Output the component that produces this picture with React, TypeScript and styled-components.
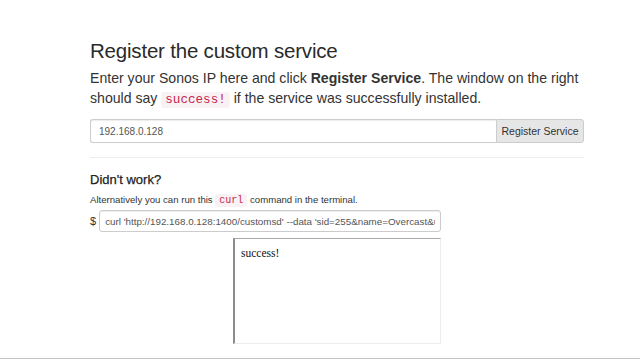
import styled, { createGlobalStyle } from 'styled-components';

import React from 'react';

const GlobalStyle = createGlobalStyle`
  html, body {
    margin: 0;
    padding: 0;
    background: #ffffff;
  }
  body {
    font-family: 'Liberation Sans', Arial, sans-serif;
    color: #333333;
  }
`;

const S: Record<string, any> = {};

S.Page = styled.div`
  width: 640px;
  height: 360px;
  overflow: hidden;
  display: flex;
  flex-direction: column;
`;

S.Container = styled.div`
  width: 494px;
  margin-left: 90px;
  padding-top: 38px;
  flex: 1;
`;

S.Title = styled.h2`
  margin: 0 0 4px;
  font-size: 20.5px;
  line-height: 26px;
  font-weight: 400;
  color: #2a2a2a;
  letter-spacing: -0.2px;
`;

S.Lead = styled.p`
  margin: 0 0 11px;
  font-size: 14.1px;
  line-height: 20px;
  color: #333;

  strong {
    font-weight: 700;
  }
`;

S.Code = styled.code`
  font-family: 'Liberation Mono', 'DejaVu Sans Mono', monospace;
  font-size: ${(p: { small?: boolean }) => (p.small ? '10px' : '12.6px')};
  line-height: 1;
  color: #c7254e;
  background: #f9f2f4;
  padding: 1px 4px;
  border-radius: 3px;
`;

S.InputGroup = styled.div`
  display: flex;
  height: 24px;
`;

S.Field = styled.input`
  flex: 1;
  min-width: 0;
  box-sizing: border-box;
  height: 100%;
  border: 1px solid #cccccc;
  border-right: none;
  border-radius: 3px 0 0 3px;
  padding: 0 8px;
  font-family: 'Liberation Sans', Arial, sans-serif;
  font-size: 10px;
  color: #555;
  box-shadow: inset 0 1px 1px rgba(0, 0, 0, 0.075);
  outline: none;
`;

S.Button = styled.button`
  box-sizing: border-box;
  height: 100%;
  width: 88px;
  border: 1px solid #cccccc;
  border-radius: 0 3px 3px 0;
  background: #e6e6e6;
  font-family: 'Liberation Sans', Arial, sans-serif;
  font-size: 10.5px;
  color: #333;
  padding: 0;
`;

S.Rule = styled.hr`
  margin: 14px 0 13px;
  border: 0;
  border-top: 1px solid #eeeeee;
`;

S.Subtitle = styled.h4`
  margin: 0 0 3px;
  font-size: 13px;
  line-height: 18px;
  font-weight: 400;
  color: #222;
  -webkit-text-stroke: 0.25px #222;
`;

S.Note = styled.p`
  margin: 0 0 2px;
  font-size: 9.6px;
  line-height: 16px;
  color: #333;
`;

S.CommandRow = styled.div`
  display: flex;
  align-items: center;
  gap: 3px;
  width: 351px;
  height: 22px;
`;

S.Dollar = styled.span`
  font-size: 11px;
  color: #333;
`;

S.Command = styled.input`
  flex: 1;
  min-width: 0;
  box-sizing: border-box;
  height: 100%;
  border: 1px solid #cccccc;
  border-radius: 3px;
  padding: 0 5px;
  font-family: 'Liberation Sans', Arial, sans-serif;
  font-size: 9.8px;
  color: #555;
  box-shadow: inset 0 1px 1px rgba(0, 0, 0, 0.075);
  outline: none;
`;

S.FrameWrap = styled.div`
  display: flex;
  justify-content: center;
  margin-top: 6px;
`;

S.Frame = styled.div`
  box-sizing: border-box;
  width: 208px;
  height: 106px;
  border-style: solid;
  border-width: 1px 1px 1px 2px;
  border-top-color: #a8a8a8;
  border-left-color: #8c8c8c;
  border-right-color: #ececec;
  border-bottom-color: #ececec;
  padding: 8px 6px;
  font-family: 'Liberation Serif', 'Times New Roman', serif;
  font-size: 11.5px;
  color: #111;
`;

S.Footer = styled.div`
  height: 1px;
  border-top: 1px solid #c4c4c4;
`;

const App: React.FC = () => {
  const command =
    "curl 'http://192.168.0.128:1400/customsd' --data 'sid=255&name=Overcast&uri=http://192.168.0.2:8080'";

  return (
    <S.Page>
      <GlobalStyle />
      <S.Container>
        <S.Title>Register the custom service</S.Title>
        <S.Lead>
          Enter your Sonos IP here and click <strong>Register Service</strong>.
          The window on the right should say <S.Code>success!</S.Code> if the
          service was successfully installed.
        </S.Lead>
        <S.InputGroup>
          <S.Field defaultValue='192.168.0.128' />
          <S.Button>Register Service</S.Button>
        </S.InputGroup>
        <S.Rule />
        <S.Subtitle>Didn't work?</S.Subtitle>
        <S.Note>
          Alternatively you can run this <S.Code small>curl</S.Code> command in
          the terminal.
        </S.Note>
        <S.CommandRow>
          <S.Dollar>$</S.Dollar>
          <S.Command defaultValue={command} readOnly />
        </S.CommandRow>
        <S.FrameWrap>
          <S.Frame>success!</S.Frame>
        </S.FrameWrap>
      </S.Container>
      <S.Footer />
    </S.Page>
  );
};

export default App;
